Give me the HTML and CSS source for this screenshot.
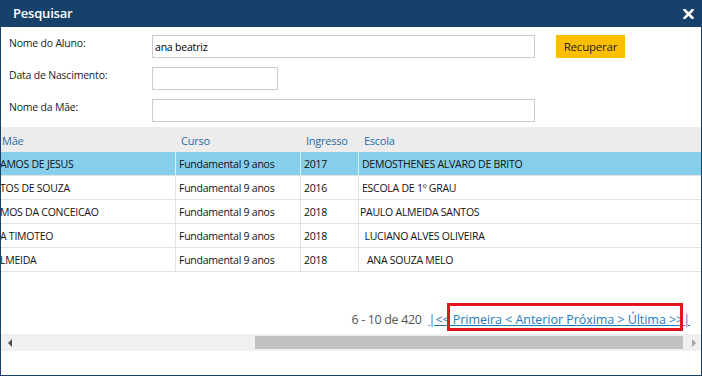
FILE: index.html
```
<!DOCTYPE html>
<html lang="pt-BR">
<head>
    <meta charset="UTF-8">
    <meta name="viewport" content="width=device-width, initial-scale=1.0">
    <title>Pesquisar</title>
    <link rel="stylesheet" href="styles.css">
</head>
<body>

<div class="dialog">
    <div class="titlebar">
        <span class="title">Pesquisar</span>
        <svg class="close" width="11" height="10" viewBox="0 0 11 10">
            <path d="M1.5 1 L9.5 9 M9.5 1 L1.5 9" stroke="#fff" stroke-width="2.6" stroke-linecap="square"/>
        </svg>
    </div>

    <div class="form">
        <div class="form-row">
            <label>Nome do Aluno:</label>
            <input class="wide" type="text" value="ana beatriz">
            <button class="btn-recuperar">Recuperar</button>
        </div>
        <div class="form-row">
            <label>Data de Nascimento:</label>
            <input class="short" type="text">
        </div>
        <div class="form-row">
            <label>Nome da Mãe:</label>
            <input class="wide" type="text">
        </div>
    </div>

    <div class="grid">
        <table>
            <colgroup>
                <col class="c-mae">
                <col class="c-curso">
                <col class="c-ingresso">
                <col class="c-escola">
            </colgroup>
            <thead>
                <tr>
                    <th class="mae">Mãe</th>
                    <th>Curso</th>
                    <th>Ingresso</th>
                    <th>Escola</th>
                </tr>
            </thead>
            <tbody>
                <tr class="selected">
                    <td class="mae">AMOS DE JESUS</td>
                    <td>Fundamental 9 anos</td>
                    <td>2017</td>
                    <td>DEMOSTHENES ALVARO DE BRITO</td>
                </tr>
                <tr>
                    <td class="mae">TOS DE SOUZA</td>
                    <td>Fundamental 9 anos</td>
                    <td>2016</td>
                    <td>ESCOLA DE 1º GRAU</td>
                </tr>
                <tr>
                    <td class="mae">MOS DA CONCEICAO</td>
                    <td>Fundamental 9 anos</td>
                    <td>2018</td>
                    <td class="tight">PAULO ALMEIDA SANTOS</td>
                </tr>
                <tr>
                    <td class="mae">A TIMOTEO</td>
                    <td>Fundamental 9 anos</td>
                    <td>2018</td>
                    <td>&nbsp;LUCIANO ALVES OLIVEIRA</td>
                </tr>
                <tr>
                    <td class="mae">LMEIDA</td>
                    <td>Fundamental 9 anos</td>
                    <td>2018</td>
                    <td>&nbsp; ANA SOUZA MELO</td>
                </tr>
            </tbody>
        </table>
    </div>

    <div class="pager">
        <span class="count">6 - 10 de 420</span>
        <a class="pager-links" href="#">|&lt;&lt; Primeira &lt; Anterior Próxima &gt; Última &gt;&gt;|</a>
        <div class="highlight"></div>
    </div>

    <div class="hscroll">
        <span class="arrow left"></span>
        <div class="track">
            <div class="thumb"></div>
        </div>
        <span class="arrow right"></span>
    </div>
</div>

</body>
</html>
```

FILE: styles.css
```
* {
    box-sizing: border-box;
}
body {
    margin: 0;
    font-family: "Open Sans", "Noto Sans", sans-serif;
    background: #fff;
}
.dialog {
    width: 702px;
    height: 376px;
    border: 1px solid #17416a;
    border-top: none;
    background: #fff;
    overflow: hidden;
    display: flex;
    flex-direction: column;
}
.titlebar {
    height: 27px;
    margin: 0 -1px;
    background: #17416a;
    display: flex;
    align-items: center;
    justify-content: space-between;
    padding: 0 8px 1px 13px;
}
.title {
    color: #fff;
    font-size: 13px;
    font-weight: 600;
    letter-spacing: -0.2px;
}
.close {
    margin-top: 1px;
}

.form {
    padding: 8px 0 0 8px;
    height: 100px;
}
.form-row {
    display: flex;
    align-items: flex-start;
    height: 23px;
    margin-bottom: 9px;
}
.form-row label {
    width: 143px;
    font-size: 10.5px;
    letter-spacing: -0.2px;
    color: #222;
    padding-top: 1px;
}
.form-row input {
    height: 23px;
    border: 1px solid #cccccc;
    font-family: inherit;
    font-size: 10.5px;
    letter-spacing: -0.2px;
    padding: 0 2px;
    color: #000;
    outline: none;
}
.wide {
    width: 383px;
}
.short {
    width: 126px;
}
.btn-recuperar {
    margin-left: 21px;
    width: 69px;
    height: 23px;
    border: none;
    background: #fcbf00;
    font-family: inherit;
    font-size: 11.5px;
    letter-spacing: -0.2px;
    color: #222;
    padding: 0;
}

.grid {
    overflow: hidden;
}
table {
    border-collapse: separate;
    border-spacing: 0;
    table-layout: fixed;
    width: 700px;
    font-size: 10.5px;
    letter-spacing: -0.25px;
}
.c-mae { width: 175px; }
.c-curso { width: 125px; }
.c-ingresso { width: 58px; }
.c-escola { width: 342px; }
th {
    height: 25px;
    background: #ececec;
    color: #2b6ca3;
    font-weight: normal;
    text-align: left;
    padding: 2px 0 0 5px;
    font-size: 11px;
}
td {
    height: 24px;
    padding: 1px 0 0 3px;
    border-right: 1px solid #e2e2e2;
    border-bottom: 1px solid #e2e2e2;
    color: #111;
    white-space: nowrap;
    overflow: hidden;
}
td:last-child {
    border-right: none;
}
td.mae {
    text-indent: -1px;
    padding-left: 0;
}
th.mae {
    padding-left: 1px;
}
.tight {
    padding-left: 1px;
}
.selected td {
    background: #87ceeb;
    border-right-color: #d8eef8;
}

.pager {
    position: relative;
    margin-top: auto;
    display: flex;
    justify-content: flex-end;
    align-items: center;
    padding: 0 11px 6px 0;
    font-size: 12.5px;
}
.count {
    color: #555;
    margin-right: 7px;
    letter-spacing: -0.35px;
}
.pager-links {
    color: #1e7bbd;
    text-decoration: underline;
    letter-spacing: -0.05px;
}
.highlight {
    position: absolute;
    left: 446px;
    bottom: 3px;
    width: 236px;
    height: 28px;
    border: 3px solid #e3161f;
}

.hscroll {
    height: 17px;
    margin-bottom: 24px;
    background: #f0f0f0;
    display: flex;
    align-items: center;
}
.arrow {
    width: 0;
    height: 0;
    border-top: 4px solid transparent;
    border-bottom: 4px solid transparent;
}
.arrow.left {
    margin: 0 0 0 7px;
    border-right: 4px solid #505050;
}
.arrow.right {
    margin: 0 5px 0 9px;
    border-left: 4px solid #a3a3a3;
}
.track {
    flex: 1;
    height: 13px;
    display: flex;
    justify-content: flex-end;
}
.thumb {
    width: 428px;
    height: 13px;
    background: #c1c1c1;
}
```
